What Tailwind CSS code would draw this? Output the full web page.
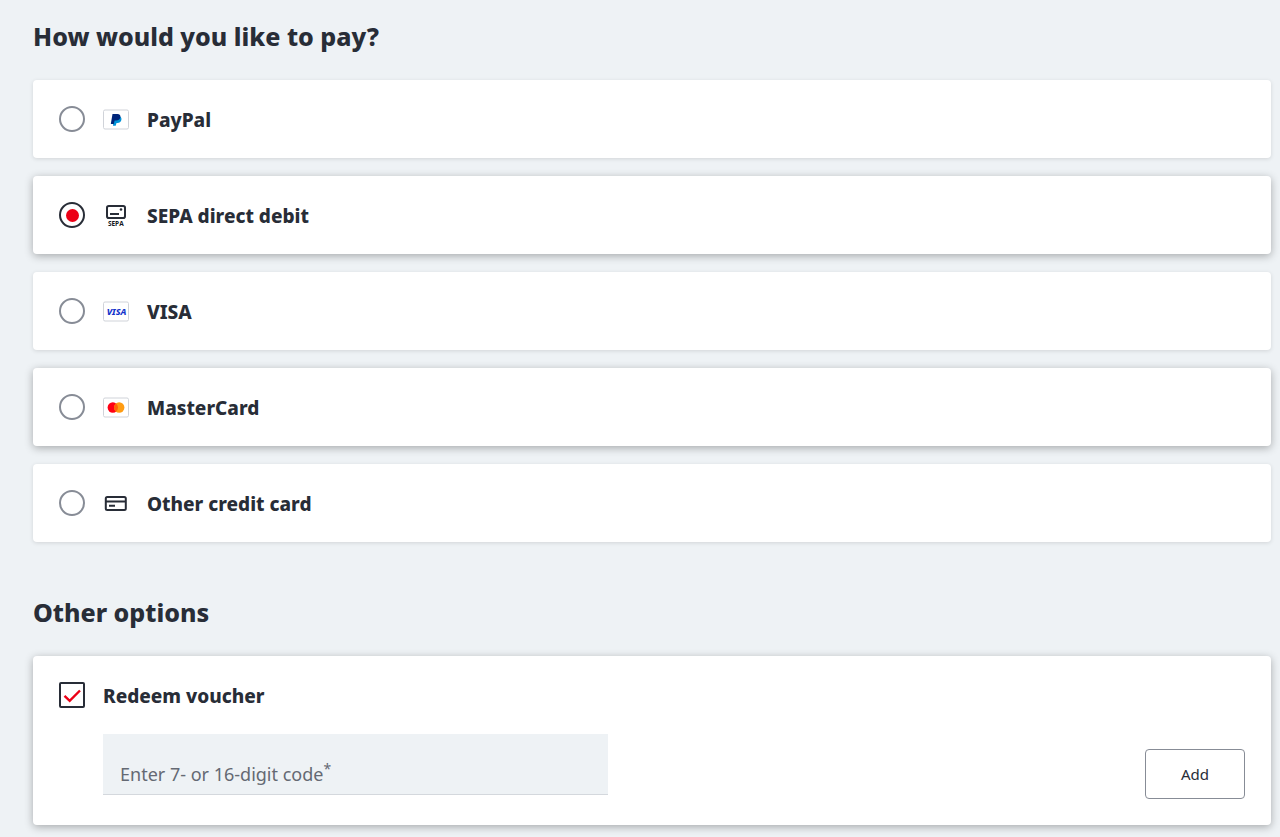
<!DOCTYPE html>
<html lang="en">
<head>
  <meta charset="UTF-8" />
  <title>Payment</title>
  <meta name="viewport" content="width=device-width, initial-scale=1.0">
  <script src="https://cdn.jsdelivr.net/npm/@tailwindcss/browser@4"></script>
</head>
<body class="bg-[#eef2f5] text-[#282d37] font-['Noto_Sans',sans-serif]">
  <main class="pl-[33px] pr-[9px] pt-4 pb-3">

    <!-- Payment methods -->
    <h1 class="text-[25px] leading-10 font-extrabold">How would you like to pay?</h1>
    <form class="mt-6 flex flex-col gap-[18px]">
      <label class="flex items-center gap-[18px] h-[78px] px-[26px] bg-white rounded shadow-[0_1px_4px_rgba(0,0,0,0.12)] cursor-pointer">
        <input type="radio" name="payment" value="paypal" class="appearance-none grid place-content-center size-[26px] rounded-full border-2 border-[#878c96] bg-white checked:border-[#282d37] before:size-[13px] before:rounded-full checked:before:bg-[#ec0016]">
        <svg class="w-[26px] h-[26px]" viewBox="0 0 26 26" aria-hidden="true">
          <rect x="0.5" y="4" width="25" height="19" rx="1.5" fill="#fff" stroke="#d0d3d9" />
          <path d="M10.6 10h4.800c2.300.4 3.500 1.900 3 4.100-.5 2-2 2.900-3.900 2.900h-1l-.8 2.700H10z" fill="#0093d8" />
          <path d="M9.500 8h5c2.200 0 3.300 1.300 2.900 3.200-.5 2.400-2.100 3.300-4.300 3.300h-1.500l-.8 3.600H7.800z" fill="#00257a" />
        </svg>
        <span class="pt-0.5 text-[19px] font-extrabold">PayPal</span>
      </label>

      <label class="flex items-center gap-[18px] h-[78px] px-[26px] bg-white rounded shadow-[0_2px_8px_rgba(0,0,0,0.3)] cursor-pointer">
        <input type="radio" name="payment" value="sepa" checked class="appearance-none grid place-content-center size-[26px] rounded-full border-2 border-[#878c96] bg-white checked:border-[#282d37] before:size-[13px] before:rounded-full checked:before:bg-[#ec0016]">
        <svg class="w-[26px] h-[26px]" viewBox="0 0 26 26" aria-hidden="true">
          <rect x="4" y="4" width="18" height="12" rx="1.800" fill="none" stroke="#282d37" stroke-width="2" />
          <path d="M7 12h9" stroke="#282d37" stroke-width="2" />
          <circle cx="18" cy="7.500" r="1.300" fill="#282d37" />
          <text x="12.800" y="24" text-anchor="middle" font-size="6.500" font-weight="700" fill="#131821" class="font-['Open_Sans',sans-serif]">SEPA</text>
        </svg>
        <span class="pt-0.5 text-[19px] font-extrabold">SEPA direct debit</span>
      </label>

      <label class="flex items-center gap-[18px] h-[78px] px-[26px] bg-white rounded shadow-[0_1px_4px_rgba(0,0,0,0.12)] cursor-pointer">
        <input type="radio" name="payment" value="visa" class="appearance-none grid place-content-center size-[26px] rounded-full border-2 border-[#878c96] bg-white checked:border-[#282d37] before:size-[13px] before:rounded-full checked:before:bg-[#ec0016]">
        <svg class="w-[26px] h-[26px]" viewBox="0 0 26 26" aria-hidden="true">
          <rect x="0.5" y="4" width="25" height="19" rx="1.5" fill="#fff" stroke="#d0d3d9" />
          <text x="13.500" y="17" text-anchor="middle" font-size="9" font-weight="800" font-style="italic" fill="#1434cb" class="font-['Noto_Sans',sans-serif]">VISA</text>
        </svg>
        <span class="pt-0.5 text-[19px] font-extrabold">VISA</span>
      </label>

      <label class="flex items-center gap-[18px] h-[78px] px-[26px] bg-white rounded shadow-[0_2px_8px_rgba(0,0,0,0.3)] cursor-pointer">
        <input type="radio" name="payment" value="mastercard" class="appearance-none grid place-content-center size-[26px] rounded-full border-2 border-[#878c96] bg-white checked:border-[#282d37] before:size-[13px] before:rounded-full checked:before:bg-[#ec0016]">
        <svg class="w-[26px] h-[26px]" viewBox="0 0 26 26" aria-hidden="true">
          <rect x="0.5" y="4" width="25" height="19" rx="1.5" fill="#fff" stroke="#d0d3d9" />
          <circle cx="9.800" cy="13.500" r="5.200" fill="#ff0014" />
          <circle cx="16.200" cy="13.500" r="5.200" fill="#ff9c12" />
          <path d="M13 9.400a5.200 5.200 0 0 1 0 8.200a5.200 5.200 0 0 1 0-8.200z" fill="#ff6208" />
        </svg>
        <span class="pt-0.5 text-[19px] font-extrabold">MasterCard</span>
      </label>

      <label class="flex items-center gap-[18px] h-[78px] px-[26px] bg-white rounded shadow-[0_1px_4px_rgba(0,0,0,0.12)] cursor-pointer">
        <input type="radio" name="payment" value="card" class="appearance-none grid place-content-center size-[26px] rounded-full border-2 border-[#878c96] bg-white checked:border-[#282d37] before:size-[13px] before:rounded-full checked:before:bg-[#ec0016]">
        <svg class="w-[26px] h-[26px]" viewBox="0 0 26 26" aria-hidden="true">
          <rect x="2.800" y="7" width="20" height="13" rx="1.500" fill="none" stroke="#282d37" stroke-width="2" />
          <path d="M3 11.500h20M6 15.800h6" stroke="#282d37" stroke-width="2" />
        </svg>
        <span class="pt-0.5 text-[19px] font-extrabold">Other credit card</span>
      </label>
    </form>

    <!-- Voucher -->
    <h2 class="mt-[50px] text-[25px] leading-10 font-extrabold">Other options</h2>
    <section class="mt-6 px-[26px] py-[26px] bg-white rounded shadow-[0_2px_8px_rgba(0,0,0,0.3)]">
      <label class="flex items-center gap-[18px] h-[26px] cursor-pointer">
        <span class="grid size-[26px]">
          <input type="checkbox" checked class="peer col-start-1 row-start-1 appearance-none size-[26px] rounded-xs border-2 border-[#282d37] bg-white">
          <svg class="col-start-1 row-start-1 size-[26px] pointer-events-none invisible peer-checked:visible" viewBox="0 0 26 26" fill="none" stroke="#ec0016" stroke-width="2.400" aria-hidden="true">
            <path d="M5.500 13.800l5.200 5L21 8.500" />
          </svg>
        </span>
        <span class="pt-0.5 text-[19px] font-extrabold">Redeem voucher</span>
      </label>
      <div class="mt-[26px] pl-11 flex justify-between items-end gap-6">
        <div class="grid w-full max-w-[505px] mb-1">
          <input id="voucher" type="text" placeholder=" " class="peer col-start-1 row-start-1 w-full h-[61px] px-[17px] pt-[18px] bg-[#eef2f5] border-b border-[#d4d8dd] text-lg">
          <label for="voucher" class="col-start-1 row-start-1 px-[17px] pt-[26px] text-lg text-[#646973] pointer-events-none invisible peer-placeholder-shown:visible">Enter 7- or 16-digit code<sup class="text-sm leading-none">*</sup></label>
        </div>
        <button type="button" class="w-[100px] h-[50px] shrink-0 rounded border border-[#878c96] bg-white text-[15px]">Add</button>
      </div>
    </section>

  </main>
</body>
</html>
